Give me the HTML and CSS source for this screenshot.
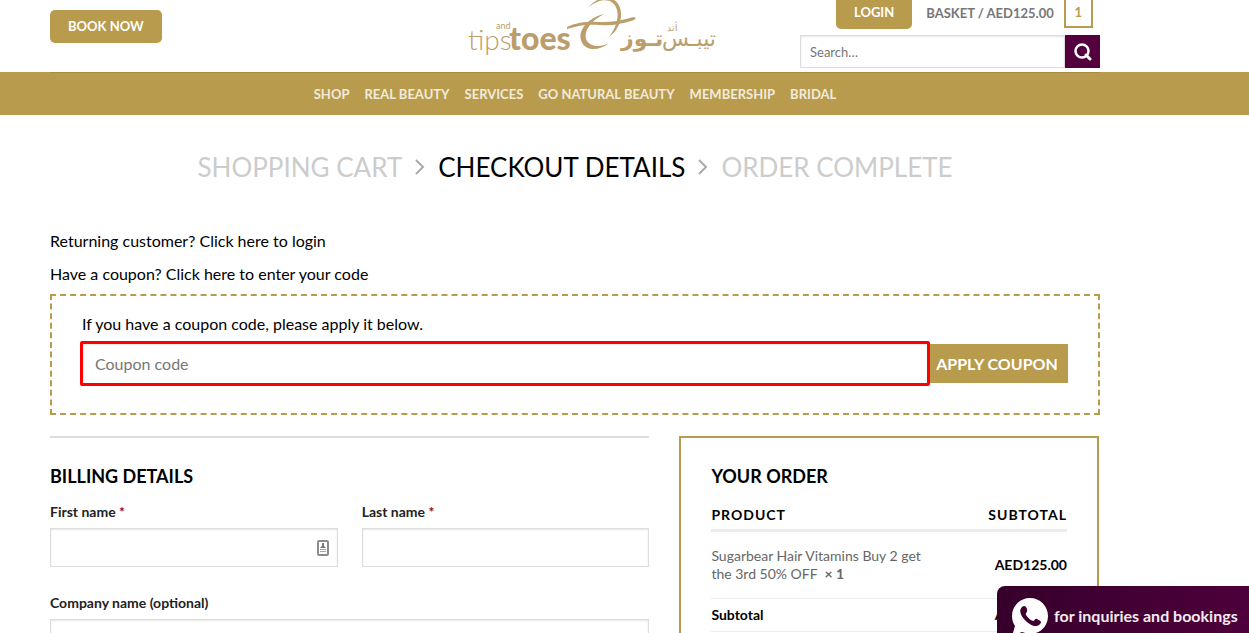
FILE: index.html
```html
<!DOCTYPE html>
<html lang="en">
<head>
    <meta charset="UTF-8" />
    <meta name="viewport" content="width=device-width, initial-scale=1.0"/>
    <title>Checkout - Tips and Toes</title>
    <link rel="stylesheet" href="styles.css">
</head>
<body>
<header class="header">
    <div class="container header-inner">
        <div class="header-left">
            <a href="#" class="btn">Book now</a>
        </div>

        <a href="#" class="logo" aria-label="Tips and Toes">
            <svg width="250" height="64" viewBox="0 0 250 64" fill="#bb9e6b">
                <text x="2" y="50" class="logo-light">tips</text>
                <text x="43" y="50" class="logo-bold">toes</text>
                <text x="30" y="29" class="logo-and">and</text>
                <path d="M122 8C128 0 136 -3 143 -2C154 0 157 12 154 22C151 30 147 34 143 37C150 28 153 18 151 10C148 -2 134 -3 122 8Z"/>
                <path d="M138 14C122 18 112 30 115 40C118 51 132 52 143 43C134 48 123 47 120 39C118 30 125 21 138 14Z"/>
                <path d="M101 27C116 20 127 22 139 22C150 22 159 19 168 17Q171 18 168 20C156 24 146 26 134 25C122 24 113 25 101 29Z"/>
                <text x="155" y="46" class="logo-arabic-bold">تـوز</text>
                <text x="196" y="46" class="logo-arabic">تيبـس</text>
                <text x="201" y="31" class="logo-and">أند</text>
            </svg>
        </a>

        <div class="header-right">
            <div class="account">
                <a href="#" class="btn">Login</a>
                <a href="#" class="basket">Basket / AED125.00 <span class="basket-count">1</span></a>
            </div>
            <form class="search">
                <input type="search" class="field" placeholder="Search…" aria-label="Search" />
                <button type="submit" class="search-btn" aria-label="Search">
                    <svg width="18" height="18" viewBox="0 0 18 18" fill="none" stroke="#fff" stroke-width="2.5">
                        <circle cx="8" cy="8" r="6.5"/>
                        <path d="M12 12L16 16" stroke-width="3" stroke-linecap="round"/>
                    </svg>
                </button>
            </form>
        </div>
    </div>
</header>

<nav class="nav">
    <div class="container nav-inner">
        <a href="#">Shop</a>
        <a href="#">Real Beauty</a>
        <a href="#">Services</a>
        <a href="#">Go Natural Beauty</a>
        <a href="#">Membership</a>
        <a href="#">Bridal</a>
    </div>
</nav>

<main class="container">
    <div class="steps">
        <a href="#">Shopping Cart</a>
        <svg class="chevron" width="10" height="16" viewBox="0 0 10 16"><path d="M1 1L8 8L1 15"/></svg>
        <a href="#" class="current">Checkout details</a>
        <svg class="chevron" width="10" height="16" viewBox="0 0 10 16"><path d="M1 1L8 8L1 15"/></svg>
        <a href="#">Order Complete</a>
    </div>

    <div class="notices">
        <p>Returning customer? <a href="#">Click here to login</a></p>
        <p>Have a coupon? <a href="#">Click here to enter your code</a></p>
    </div>

    <form class="coupon">
        <label for="coupon">If you have a coupon code, please apply it below.</label>
        <div class="coupon-row">
            <input type="text" id="coupon" class="field coupon-field" placeholder="Coupon code" />
            <button type="submit" class="coupon-btn">Apply coupon</button>
        </div>
    </form>

    <div class="checkout">
        <form class="billing">
            <h3>Billing details</h3>
            <div class="form-row">
                <div class="form-group">
                    <label for="firstName">First name <span class="required">*</span></label>
                    <div class="field-wrap">
                        <input type="text" id="firstName" class="field" />
                        <svg class="autofill" width="12" height="16" viewBox="0 0 12 16">
                            <rect x="1" y="1" width="10" height="14" rx="1" fill="#fff" stroke="#8c8c8c" stroke-width="2"/>
                            <path d="M5 3H7V6L9 8H3L5 6Z" fill="#777"/>
                            <path d="M3 9.500H9M3 11.500H9" stroke="#a5a5a5"/>
                        </svg>
                    </div>
                </div>
                <div class="form-group">
                    <label for="lastName">Last name <span class="required">*</span></label>
                    <input type="text" id="lastName" class="field" />
                </div>
            </div>
            <div class="form-group">
                <label for="company">Company name (optional)</label>
                <input type="text" id="company" class="field" />
            </div>
        </form>

        <section class="order">
            <h3>Your order</h3>
            <table>
                <thead>
                    <tr><th>Product</th><th>Subtotal</th></tr>
                </thead>
                <tbody>
                    <tr class="item">
                        <td>Sugarbear Hair Vitamins Buy 2 get the 3rd 50% OFF &nbsp;<strong>× 1</strong></td>
                        <td>AED125.00</td>
                    </tr>
                    <tr class="subtotal">
                        <td>Subtotal</td>
                        <td>AED125.00</td>
                    </tr>
                </tbody>
            </table>
        </section>
    </div>
</main>

<a href="#" class="chat">
    <svg width="36" height="38" viewBox="0 0 36 38">
        <path d="M18 0C8 0 0 8 0 18C0 22 1 25 3 28L0 38L10 34C26 40 36 29 36 18C36 8 28 0 18 0Z" fill="#fff"/>
        <path d="M10 9C12 7 14 8 15 11C16 14 13 15 14 17C16 20 18 22 21 23C23 23 23 20 25 21C29 23 30 24 28 26C24 31 16 26 12 21C8 16 7 12 10 9Z" fill="#3f0031"/>
    </svg>
    <span>for inquiries and bookings</span>
</a>
</body>
</html>
```

FILE: styles.css
```css
* {
    box-sizing: border-box;
}

body {
    margin: 0;
    height: 100vh;
    overflow: hidden;
    font-family: Lato, sans-serif;
    font-size: 16px;
    line-height: 24px;
    color: #000;
    background-color: #fff;
}

a {
    color: inherit;
    text-decoration: none;
}

.container {
    max-width: 1050px;
    margin-left: 50px;
    margin-right: 50px;
}

/* Header */
.header {
    height: 72px;
    overflow: hidden;
}

.header-inner {
    display: grid;
    grid-template-columns: 1fr 250px 1fr;
    column-gap: 50px;
}

.header-left {
    padding-top: 10px;
}

.btn {
    display: inline-block;
    padding: 0 18px;
    font-size: 13px;
    font-weight: bold;
    line-height: 33px;
    text-transform: uppercase;
    color: #fff;
    background-color: #b89b4c;
    border-radius: 5px;
}

.logo {
    margin-left: 16px;
}

.logo svg {
    display: block;
}

.logo-light {
    font-size: 28px;
    font-weight: 300;
}

.logo-bold {
    font-size: 32px;
    font-weight: 900;
}

.logo-and {
    font-size: 9px;
}

.logo-arabic,
.logo-arabic-bold {
    font-family: "DejaVu Sans", sans-serif;
    font-size: 22px;
}

.logo-arabic-bold {
    font-weight: bold;
}

.header-right {
    width: 300px;
    margin-top: -4px;
    justify-self: end;
}

.account {
    display: flex;
    align-items: center;
    gap: 14px;
    padding-left: 36px;
}

.basket {
    display: flex;
    align-items: center;
    gap: 10px;
    font-size: 13px;
    font-weight: bold;
    text-transform: uppercase;
    white-space: nowrap;
    color: #777;
}

.basket-count {
    flex: none;
    width: 29px;
    border: 2px solid #b89b4c;
    line-height: 27px;
    text-align: center;
    color: #b89b4c;
}

.field {
    display: block;
    width: 100%;
    height: 39px;
    padding: 0 12px;
    border: 1px solid #ddd;
    border-radius: 0;
    outline: none;
    font-family: inherit;
    font-size: 16px;
    color: #333;
    background-color: #fff;
    box-shadow: inset 0 1px 2px rgba(0, 0, 0, 0.1);
}

.field::placeholder {
    color: #777;
}

.search {
    display: flex;
    margin-top: 6px;
}

.search .field {
    height: 33px;
    padding: 0 9px;
    font-size: 13px;
}

.search-btn {
    display: flex;
    align-items: center;
    justify-content: center;
    flex: 0 0 35px;
    padding: 0;
    border: none;
    background-color: #54003f;
    cursor: pointer;
}

/* Navigation */
.nav {
    background-color: #b89b4c;
}

.nav-inner {
    display: flex;
    justify-content: center;
    gap: 15px;
    padding-top: 1px;
    border-top: 1px solid #a98f46;
    font-size: 13px;
    font-weight: bold;
    line-height: 41px;
    text-transform: uppercase;
    color: #f1ebdb;
}

/* Checkout steps */
.steps {
    display: flex;
    align-items: center;
    justify-content: center;
    gap: 13px;
    padding: 32px 0 42px;
    font-size: 26px;
    line-height: 40px;
    text-transform: uppercase;
    color: #ccc;
}

.steps .current {
    color: #000;
}

.chevron {
    fill: none;
    stroke: #aaa;
    stroke-width: 2;
}

.notices {
    display: grid;
    row-gap: 9px;
    margin-bottom: 8px;
}

.notices p {
    margin: 0;
}

/* Coupon */
.coupon {
    margin-bottom: 21px;
    padding: 16px 30px 27px;
    border: 2px dashed #b89b4c;
}

.coupon-row {
    display: flex;
    margin: 5px 0 0 -2px;
}

.coupon-field {
    height: 45px;
    border: 3px solid #f00;
    border-radius: 2px;
}

.coupon-btn {
    flex: 0 0 138px;
    height: 39px;
    margin-top: 3px;
    padding: 0 4px 0 0;
    border: none;
    font-family: inherit;
    font-size: 16px;
    font-weight: bold;
    text-transform: uppercase;
    color: #fff;
    background-color: #b89b4c;
    cursor: pointer;
}

/* Billing and order columns */
.checkout {
    display: grid;
    grid-template-columns: 10fr 7fr;
    column-gap: 30px;
    margin-right: 1px;
}

h3 {
    margin: 0;
    font-size: 18px;
    line-height: 24px;
    text-transform: uppercase;
}

.billing {
    border-top: 2px solid #ddd;
    padding-top: 26px;
}

.form-row {
    display: grid;
    grid-template-columns: 1fr 1fr;
    column-gap: 24px;
}

.form-group {
    padding-top: 12px;
    margin-bottom: 12px;
}

.form-group label {
    display: block;
    margin-bottom: 4px;
    font-size: 14px;
    font-weight: bold;
    line-height: 24px;
    color: #222;
}

.form-group .required {
    color: #b20000;
}

.field-wrap {
    position: relative;
}

.autofill {
    position: absolute;
    right: 9px;
    top: 12px;
}

.order {
    padding: 26px 30px;
    border: 2px solid #b89b4c;
}

.order table {
    width: 100%;
    margin-top: 9px;
    border-collapse: collapse;
    font-size: 14px;
    line-height: 18px;
}

.order th {
    padding: 9px 0 5px;
    border-bottom: 3px solid #ececec;
    text-align: left;
    text-transform: uppercase;
    letter-spacing: 1px;
}

.order td {
    padding: 7px 0;
    border-bottom: 1px solid #ececec;
    font-weight: bold;
}

.order th:last-child,
.order td:last-child {
    text-align: right;
}

.order .item td {
    padding: 15px 0;
}

.order .item td:first-child {
    width: 230px;
    font-weight: normal;
    color: #666;
}

/* Chat button */
.chat {
    position: fixed;
    right: 0;
    bottom: 0;
    display: flex;
    align-items: flex-start;
    gap: 6px;
    width: 252px;
    height: 47px;
    padding: 12px 0 0 15px;
    overflow: hidden;
    border-top-left-radius: 8px;
    font-weight: bold;
    line-height: 36px;
    white-space: nowrap;
    color: #f3eaf1;
    background: linear-gradient(90deg, #36002a, #4d003b);
}

.chat svg {
    flex: none;
}
```
